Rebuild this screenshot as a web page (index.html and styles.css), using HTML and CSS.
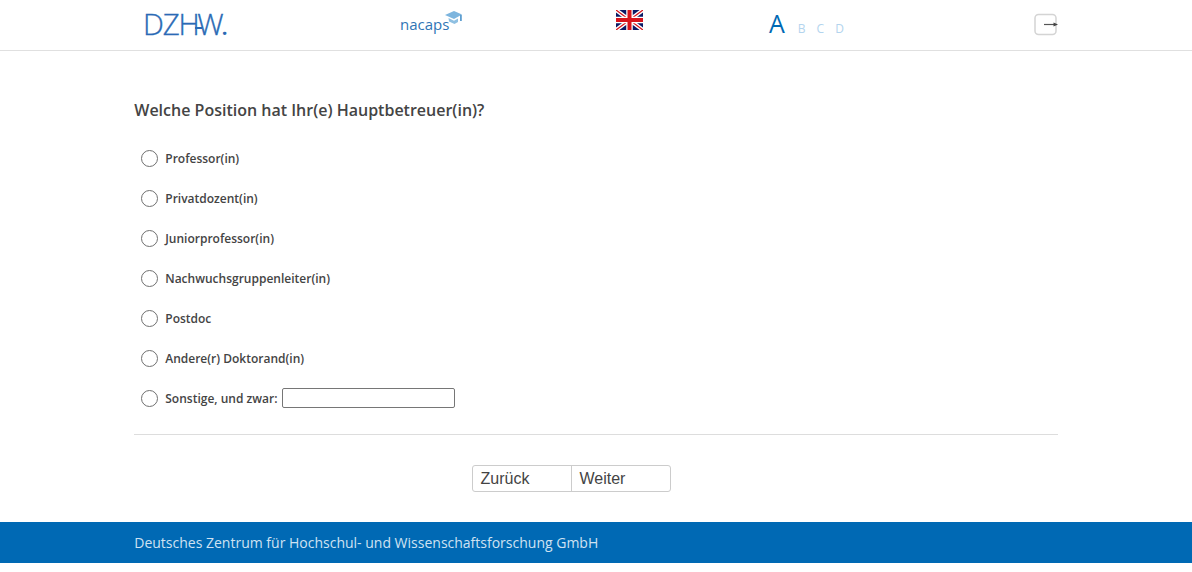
FILE: index.html
```html
<!DOCTYPE html>
<html lang="de">
<head>
<meta charset="utf-8">
<title>Hauptbetreuer</title>
<link rel="stylesheet" href="styles.css">
</head>
<body>
<header class="topbar">
  <div class="topbar-inner">
    <div class="logo-dzhw">DZH<span class="w">W</span><span class="dot">.</span></div>
    <div class="logo-nacaps">
      <span>nacaps</span>
      <svg class="cap" width="17" height="14" viewBox="0 0 17 14"><path d="M0 4 9 0l8 3.500-8 4.500z" fill="#7db5de"/><path d="M3.500 7 9 9.800l4-2.200V11l-3.500 2L4 10.500z" fill="#8fc0e2"/><rect x="15" y="4" width="1.800" height="6" fill="#5f9fd0"/></svg>
    </div>
    <svg class="flag" width="27" height="20" viewBox="0 0 54 40">
      <rect width="54" height="40" fill="#0b1a66"/>
      <path d="M0 0 54 40M54 0 0 40" stroke="#fff" stroke-width="8"/>
      <path d="M0 0 54 40M54 0 0 40" stroke="#d8141c" stroke-width="2.500"/>
      <path d="M27 0V40M0 20H54" stroke="#fff" stroke-width="13"/>
      <path d="M27 0V40M0 20H54" stroke="#d8141c" stroke-width="8"/>
    </svg>
    <div class="sizes">
      <span class="size-a">A</span>
      <span class="size-o">B</span>
      <span class="size-o">C</span>
      <span class="size-o">D</span>
    </div>
    <svg class="logout" width="24" height="23" viewBox="0 0 24 23">
      <rect x="1" y="1.500" width="21" height="20" rx="3.500" fill="#fff" stroke="#d4d4d4" stroke-width="1.500"/>
      <path d="M10 11.500H20" stroke="#555" stroke-width="1.200"/>
      <path d="M19.500 9.500 24 11.500 19.500 13.500z" fill="#444"/>
    </svg>
  </div>
</header>
<main class="content">
  <h1 class="question">Welche Position hat Ihr(e) Hauptbetreuer(in)?</h1>
  <ul class="options">
    <li class="option"><span class="radio"></span><span>Professor(in)</span></li>
    <li class="option"><span class="radio"></span><span>Privatdozent(in)</span></li>
    <li class="option"><span class="radio"></span><span>Juniorprofessor(in)</span></li>
    <li class="option"><span class="radio"></span><span>Nachwuchsgruppenleiter(in)</span></li>
    <li class="option"><span class="radio"></span><span>Postdoc</span></li>
    <li class="option"><span class="radio"></span><span>Andere(r) Doktorand(in)</span></li>
    <li class="option"><span class="radio"></span><span>Sonstige, und zwar:</span><span class="textfield"></span></li>
  </ul>
  <div class="actions">
    <div class="btn-group">
      <span class="btn">Zurück</span>
      <span class="btn">Weiter</span>
    </div>
  </div>
</main>
<footer class="footer">
  <div class="footer-inner">Deutsches Zentrum für Hochschul- und Wissenschaftsforschung GmbH</div>
</footer>
</body>
</html>
```
FILE: styles.css
```css
* { box-sizing: border-box; }
html, body { margin: 0; padding: 0; background: #fff; }
body { font-family: "Open Sans", sans-serif; color: #444; }

.topbar { height: 51px; border-bottom: 1px solid #e0e0e0; }
.topbar-inner {
  width: 924px; margin: 0 auto; height: 50px;
  display: grid;
  grid-template-columns: 266px 216px 153px 265px 24px;
  align-items: start;
}
.logo-dzhw {
  margin: 7px 0 0 9px;
  font-family: "Open Sans", sans-serif; font-weight: 300;
  font-size: 29.500px; line-height: 34px; color: #2a6ab5;
  letter-spacing: -1.100px; white-space: nowrap;
  -webkit-text-stroke: .35px #2a6ab5;
}
.logo-dzhw .w { position: relative; margin-left: -1.500px; letter-spacing: -1.800px; }
.logo-dzhw .w::before {
  content: ""; position: absolute; left: -2px; top: 24px;
  width: 7px; height: 2px; background: #2a6ab5;
}
.logo-dzhw .dot { font-size: 20px; font-weight: 700; letter-spacing: 0; -webkit-text-stroke: 0; }
.logo-nacaps {
  position: relative; margin-top: 14px;
  font-size: 15px; line-height: 20px; color: #2f75b5;
}
.logo-nacaps .cap { position: absolute; left: 45px; top: -3px; }
.flag { margin-top: 10px; display: block; }
.sizes { display: flex; align-items: baseline; height: 40px; padding-top: 7px; color: #0069b4; }
.size-a { font-size: 25px; line-height: 32px; margin-right: 13px; }
.size-o { font-size: 12px; color: #b3d4ee; margin-right: 11px; }
.logout { margin-top: 13px; display: block; }

.content { width: 924px; margin: 0 auto; height: 471px; }
.question {
  margin: 0; padding: 48px 0 0 .25px;
  font-size: 16px; line-height: 22px; font-weight: 600; color: #444;
}
.options { list-style: none; margin: 17px 0 0; padding: 0 0 16px; border-bottom: 1px solid #ddd; }
.option {
  height: 40px; display: flex; align-items: center;
  padding-left: 7px; font-size: 12px; font-weight: 600; color: #444;
}
.radio {
  width: 17px; height: 17px; border-radius: 50%;
  border: 1px solid #707070; background: #fff; margin-right: 7.250px; flex: none;
}
.textfield {
  width: 173px; height: 20px; margin-left: 4.500px;
  border: 1px solid #767676; border-radius: 2px; background: #fff;
}
.actions { display: flex; justify-content: center; padding: 30px 50px 0 0; }
.btn-group {
  display: flex; width: 199px; height: 27px;
  border: 1px solid #ccc; border-radius: 3px;
}
.btn {
  flex: 1; padding-left: 8px;
  font-family: "Liberation Sans", sans-serif; font-size: 16px; line-height: 25px; color: #444;
}
.btn + .btn { border-left: 1px solid #ccc; }

.footer { height: 41px; background: #0069b4; }
.footer-inner {
  width: 924px; margin: 0 auto; padding-left: .25px;
  font-size: 14px; line-height: 41px; color: #cfe2f2;
}
```
